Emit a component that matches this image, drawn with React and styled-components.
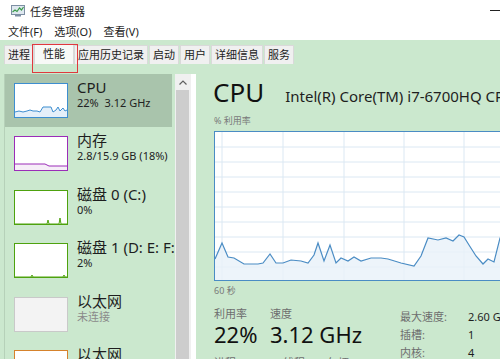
import styled, { createGlobalStyle } from "styled-components";

const GlobalStyle = createGlobalStyle`
  html, body { margin: 0; padding: 0; }
  body {
    width: 500px;
    height: 359px;
    overflow: hidden;
    font-family: "Noto Sans", "Noto Sans CJK SC", sans-serif;
  }
  * { box-sizing: border-box; }
`;

const GREEN = "#cbe8ce";

const Window = styled.div`
  position: relative;
  width: 500px;
  height: 359px;
  overflow: hidden;
  background: ${GREEN};
  display: flex;
  flex-direction: column;
`;

const TitleBar = styled.div`
  height: 21px;
  flex: none;
  background: #fff;
  display: flex;
  align-items: center;
  padding-left: 11px;
  font-size: 11px;
  color: #222;
`;

const TitleText = styled.span`
  margin-left: 5px;
`;

const Minimize = styled.span`
  margin-left: auto;
  margin-right: -2px;
  width: 12px;
  height: 1px;
  background: #222;
`;

const MenuBar = styled.div`
  height: 19px;
  flex: none;
  background: #fff;
  display: flex;
  align-items: center;
  gap: 12px;
  padding-left: 8px;
  font-size: 11px;
  color: #222;
`;

const TabBar = styled.div`
  height: 24px;
  flex: none;
  display: flex;
  align-items: flex-end;
  gap: 1px;
  padding-left: 4px;
`;

const Tab = styled.div`
  height: ${(p) => (p.$active ? 21 : 19)}px;
  line-height: ${(p) => (p.$active ? 19 : 18)}px;
  padding: 0 ${(p) => (p.$active ? 8 : 3)}px;
  margin: 0 ${(p) => (p.$active ? -1 : 0)}px;
  background: ${(p) => (p.$active ? "#f7f9f7" : "#f0f0f0")};
  border: 1px solid #d9d9d9;
  border-bottom: none;
  font-size: 11px;
  color: #222;
`;

const Body = styled.div`
  flex: 1;
  min-height: 0;
  display: flex;
  padding-top: 10px;
`;

const Sidebar = styled.div`
  width: 171px;
  margin-left: 4px;
  border-left: 1px solid #b6d1b9;
  overflow: hidden;
  display: flex;
  flex-direction: column;
`;

const Item = styled.div`
  flex: none;
  height: 53.4px;
  margin-right: 3px;
  display: flex;
  align-items: flex-start;
  padding: 9px 0 0 9px;
  background: ${(p) => (p.$selected ? "#a9c4ac" : "transparent")};
`;

const Thumb = styled.div`
  flex: none;
  width: 54px;
  height: 35px;
  margin-right: 9px;
  border: 1px solid ${(p) => p.$color};
  background: ${(p) => p.$bg || "#fff"};
  svg { display: block; }
`;

const ItemText = styled.div`
  margin-top: -5px;
  white-space: nowrap;
`;

const ItemName = styled.div`
  font-size: 15px;
  line-height: 18px;
  color: #1e1e1e;
`;

const ItemSub = styled.div`
  font-size: 11px;
  line-height: 14px;
  color: ${(p) => (p.$muted ? "#8a8a8a" : "#222")};
`;

const Scrollbar = styled.div`
  width: 16px;
  flex: none;
  background: #f0f0f0;
  display: flex;
  flex-direction: column;
`;

const ScrollArrow = styled.div`
  height: 16px;
  display: flex;
  align-items: center;
  justify-content: center;
`;

const ScrollThumb = styled.div`
  flex: 1;
  margin: 0 2px 0 1px;
  background: #cdcdcd;
`;

const Splitter = styled.div`
  width: 5px;
  flex: none;
  background: #fff;
`;

const Main = styled.div`
  flex: 1;
  min-width: 0;
  overflow: hidden;
  padding: 3px 0 0 18px;
  white-space: nowrap;
`;

const Header = styled.div`
  display: flex;
  align-items: baseline;
  height: 30px;
`;

const BigTitle = styled.span`
  font-size: 26px;
  line-height: 30px;
  color: #111;
  margin-left: -1px;
`;

const Model = styled.span`
  font-size: 15px;
  margin-left: 21px;
  color: #1e1e1e;
`;

const Caption = styled.div`
  font-size: 9px;
  line-height: 12px;
  color: #7a7a7a;
  margin-top: ${(p) => p.$top}px;
`;

const Graph = styled.div`
  width: 300px;
  height: 150px;
  margin-top: 4px;
  border: 1px solid #4a8cc4;
  background: #fff;
  svg { display: block; }
`;

const Stats = styled.div`
  display: flex;
  margin-top: 10px;
`;

const LeftStats = styled.div`
  width: 186px;
  flex: none;
`;

const StatGrid = styled.div`
  display: grid;
  grid-template-columns: 56px auto;
`;

const Label = styled.div`
  font-size: 11px;
  line-height: 14px;
  color: #6e6e6e;
  width: ${(p) => (p.$w ? `${p.$w}px` : "auto")};
`;

const Value = styled.div`
  font-size: 22px;
  line-height: 26px;
  color: #111;
`;

const LabelRow = styled.div`
  display: flex;
  margin-top: 9px;
`;

const KvGrid = styled.div`
  display: grid;
  grid-template-columns: 68px auto;
  grid-auto-rows: 18px;
  align-items: center;
  font-size: 11px;
`;

const Key = styled.div`
  color: #6e6e6e;
`;

const Val = styled.div`
  color: #1e1e1e;
`;

const Annotation = styled.div`
  position: absolute;
  left: 32px;
  top: 44px;
  width: 46px;
  height: 29px;
  border: 1px solid #e0393e;
  pointer-events: none;
`;

const AppIcon = () => (
  <svg width="14" height="12" viewBox="0 0 14 12">
    <rect x="0.5" y="0.5" width="13" height="9" fill="#dfe8f0" stroke="#7d8fa3" />
    <polyline points="1.5,7 4,5 6,6.5 8.5,3 10.5,5 12.5,2" fill="none" stroke="#3b9a4a" strokeWidth="1.2" />
    <rect x="4" y="10" width="6" height="1.5" fill="#7d8fa3" />
  </svg>
);

const cpuPts = [
  [0, 127], [7, 111], [13, 125], [19, 126], [29, 132], [43, 132], [48, 131], [55, 122],
  [61, 131], [68, 131], [76, 128], [86, 129], [93, 131], [99, 123], [103, 111], [109, 129],
  [115, 113], [121, 131], [126, 126], [133, 129], [139, 125], [146, 129], [156, 126],
  [166, 126], [173, 127], [186, 131], [199, 134], [206, 124], [213, 106], [223, 108],
  [231, 106], [238, 109], [244, 103], [249, 105], [254, 113], [261, 124], [268, 132],
  [273, 127], [279, 130], [285, 106], [292, 100], [300, 104],
];

const CpuGraph = () => {
  const line = cpuPts.map((p) => p.join(",")).join(" ");
  const area = `0,148 ${line} 300,148`;
  const vLines = [7, 68, 129, 189, 249];
  const hLines = [15, 30, 45, 60, 75, 90, 105, 120, 135];
  return (
    <svg width="298" height="148" viewBox="0 0 298 148">
      {hLines.map((y) => (
        <line key={`h${y}`} x1="0" x2="298" y1={y} y2={y} stroke="#dbe8f3" />
      ))}
      {vLines.map((x) => (
        <line key={`v${x}`} x1={x} x2={x} y1="0" y2="148" stroke="#dbe8f3" />
      ))}
      <polygon points={area} fill="#e9f1f9" fillOpacity="0.8" />
      <polyline points={line} fill="none" stroke="#4a8cc4" strokeWidth="1.2" />
    </svg>
  );
};

const MiniGraph = ({ pts, stroke, fill }) => {
  const line = pts.map((p) => p.join(",")).join(" ");
  return (
    <svg width="52" height="33" viewBox="0 0 52 33">
      {fill && <polygon points={`0,33 ${line} 52,33`} fill={fill} />}
      <polyline points={line} fill="none" stroke={stroke} strokeWidth="1" />
    </svg>
  );
};

const cpuMini = [
  [0, 28], [4, 27], [8, 28], [12, 27], [15, 26], [18, 27], [22, 27], [25, 28], [28, 23],
  [33, 23], [36, 23], [38, 28], [41, 26], [43, 23], [45, 27], [48, 24], [50, 27], [52, 26],
];
const memMini = [[0, 27], [30, 27], [34, 29], [52, 29]];
const disk0Mini = [[0, 33], [32, 33], [33, 29], [34, 33], [44, 33], [45, 27], [46, 33], [52, 33]];
const disk1Mini = [[0, 33], [16, 33], [17, 31], [18, 33], [48, 33], [49, 31], [50, 33], [52, 33]];

export default function App() {
  return (
    <>
      <GlobalStyle />
      <Window>
        <TitleBar>
          <AppIcon />
          <TitleText>任务管理器</TitleText>
          <Minimize />
        </TitleBar>
        <MenuBar>
          <span>文件(F)</span>
          <span>选项(O)</span>
          <span>查看(V)</span>
        </MenuBar>
        <TabBar>
          <Tab>进程</Tab>
          <Tab $active>性能</Tab>
          <Tab>应用历史记录</Tab>
          <Tab>启动</Tab>
          <Tab>用户</Tab>
          <Tab>详细信息</Tab>
          <Tab>服务</Tab>
        </TabBar>
        <Body>
          <Sidebar>
            <Item $selected>
              <Thumb $color="#3d8ed0">
                <MiniGraph pts={cpuMini} stroke="#3d8ed0" fill="#e4eff9" />
              </Thumb>
              <ItemText>
                <ItemName>CPU</ItemName>
                <ItemSub>22%&nbsp; 3.12 GHz</ItemSub>
              </ItemText>
            </Item>
            <Item>
              <Thumb $color="#9b2db8">
                <MiniGraph pts={memMini} stroke="#9b2db8" fill="#f6eef8" />
              </Thumb>
              <ItemText>
                <ItemName>内存</ItemName>
                <ItemSub>2.8/15.9 GB (18%)</ItemSub>
              </ItemText>
            </Item>
            <Item>
              <Thumb $color="#4ea20e">
                <MiniGraph pts={disk0Mini} stroke="#4ea20e" />
              </Thumb>
              <ItemText>
                <ItemName>磁盘 0 (C:)</ItemName>
                <ItemSub>0%</ItemSub>
              </ItemText>
            </Item>
            <Item>
              <Thumb $color="#4ea20e">
                <MiniGraph pts={disk1Mini} stroke="#4ea20e" />
              </Thumb>
              <ItemText>
                <ItemName>磁盘 1 (D: E: F:)</ItemName>
                <ItemSub>2%</ItemSub>
              </ItemText>
            </Item>
            <Item>
              <Thumb $color="#c9c9c9" $bg="#f3f3f3" />
              <ItemText>
                <ItemName>以太网</ItemName>
                <ItemSub $muted>未连接</ItemSub>
              </ItemText>
            </Item>
            <Item>
              <Thumb $color="#d6822c" />
              <ItemText>
                <ItemName>以太网</ItemName>
                <ItemSub>发送: 0 接收: 0 Kbps</ItemSub>
              </ItemText>
            </Item>
          </Sidebar>
          <Scrollbar>
            <ScrollArrow>
              <svg width="8" height="5" viewBox="0 0 8 5">
                <polyline points="0.5,4.5 4,1 7.5,4.5" fill="none" stroke="#606060" strokeWidth="1.2" />
              </svg>
            </ScrollArrow>
            <ScrollThumb />
          </Scrollbar>
          <Splitter />
          <Main>
            <Header>
              <BigTitle>CPU</BigTitle>
              <Model>Intel(R) Core(TM) i7-6700HQ CPU @ 2.60GHz</Model>
            </Header>
            <Caption $top={8}>% 利用率</Caption>
            <Graph>
              <CpuGraph />
            </Graph>
            <Caption $top={4}>60 秒</Caption>
            <Stats>
              <LeftStats>
                <StatGrid>
                  <Label>利用率</Label>
                  <Label>速度</Label>
                  <Value>22%</Value>
                  <Value>3.12 GHz</Value>
                </StatGrid>
                <LabelRow>
                  <Label $w={69}>进程</Label>
                  <Label $w={44}>线程</Label>
                  <Label>句柄</Label>
                </LabelRow>
              </LeftStats>
              <KvGrid>
                <Key>最大速度:</Key>
                <Val>2.60 GHz</Val>
                <Key>插槽:</Key>
                <Val>1</Val>
                <Key>内核:</Key>
                <Val>4</Val>
              </KvGrid>
            </Stats>
          </Main>
        </Body>
        <Annotation />
      </Window>
    </>
  );
}
